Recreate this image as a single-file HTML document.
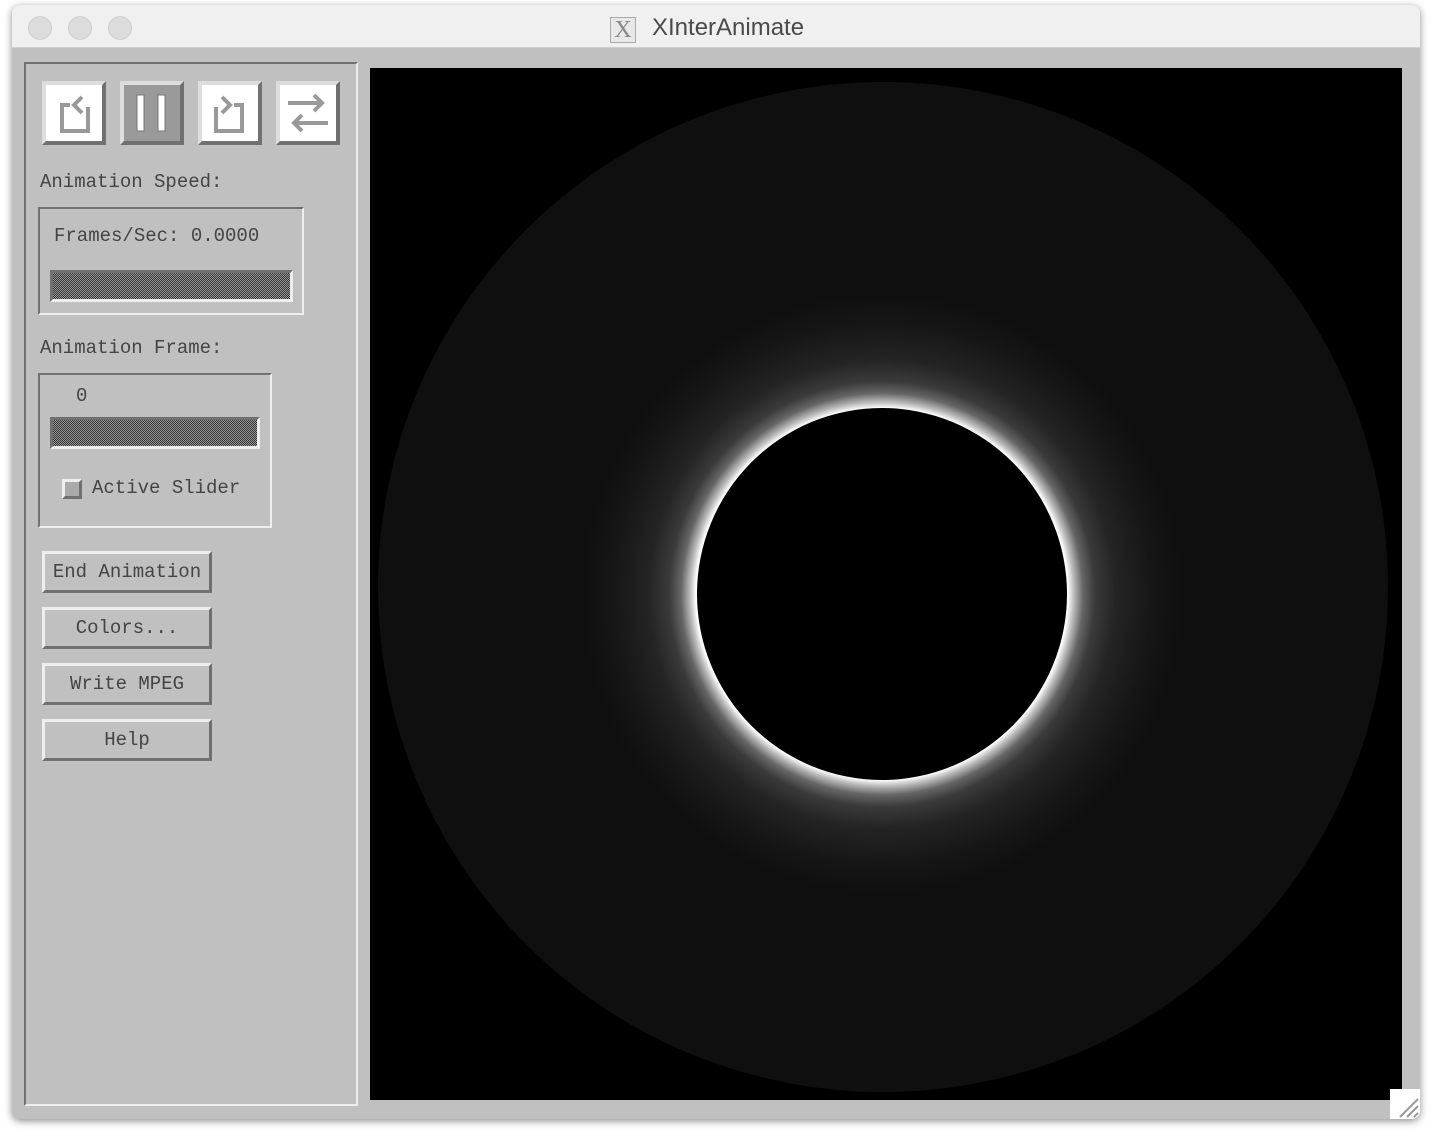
<!DOCTYPE html>
<html><head><meta charset="utf-8"><style>
*{margin:0;padding:0;box-sizing:border-box}
body{width:1432px;height:1136px;background:#fff;position:relative;overflow:hidden;font-family:"Liberation Mono",monospace}
.win{position:absolute;left:12px;top:5px;width:1408px;height:1114px;border-radius:8px;background:#c0c0c0;box-shadow:0 2px 8px rgba(0,0,0,.45);overflow:hidden}
.tb{position:absolute;left:0;top:0;width:100%;height:43px;background:#f0f0f0;border-bottom:1px solid #d0d0d0}
.dot{position:absolute;top:11px;width:24px;height:24px;border-radius:50%;background:#dcdcdc;border:1px solid #cfcfcf}
.title{position:absolute;left:640px;top:9px;font:24px "Liberation Sans",sans-serif;color:#4a4a4a}
.xi{position:absolute;left:598px;top:12px;width:26px;height:26px;border:1px solid #aaa;background:#e8e8e8;font:24px "Liberation Serif",serif;color:#888;text-align:center;line-height:24px}
.a{position:absolute}
.panel{left:12px;top:57px;width:334px;height:1044px;border:2px solid;border-color:#707070 #eee #eee #707070}
.ib{width:64px;height:64px;background:#fff;border:4px solid;border-color:#ddd #707070 #707070 #ddd}
.lbl{font-size:19px;color:#444;letter-spacing:0px}
.frame{border:2px solid;border-color:#707070 #eee #eee #707070}
.sl{border:3px solid;border-color:#707070 #eee #eee #707070;background:repeating-conic-gradient(#333 0 25%,#999 0 50%) 0 0/2px 2px}
.btn{width:170px;height:42px;border:3px solid;border-color:#eee #707070 #707070 #eee;font-size:19px;color:#444;text-align:center;line-height:36px}
.img{left:358px;top:63px;width:1032px;height:1032px;background:#000;overflow:hidden}
</style></head><body>
<div class="win">
<div class="tb">
<div class="dot" style="left:16px"></div><div class="dot" style="left:56px"></div><div class="dot" style="left:96px"></div>
<div class="xi">X</div><div class="title">XInterAnimate</div>
</div>
<div class="a panel"></div>
<div class="a ib" style="left:30px;top:76px"><svg width="56" height="56"><path d="M14 22v24h26V20h-8M20 28l8-8-8-8" fill="none" stroke="#999" stroke-width="4" transform="scale(-1,1) translate(-56,0)"/></svg></div>
<div class="a ib" style="left:108px;top:76px;background:#9a9a9a"><svg width="56" height="56"><rect x="13" y="10" width="7" height="36" fill="#fff" stroke="#777"/><rect x="34" y="10" width="7" height="36" fill="#fff" stroke="#777"/></svg></div>
<div class="a ib" style="left:186px;top:76px"><svg width="56" height="56"><path d="M14 22v24h26V20h-8M20 28l8-8-8-8" fill="none" stroke="#999" stroke-width="4"/></svg></div>
<div class="a ib" style="left:264px;top:76px"><svg width="56" height="56"><path d="M8 18h34M34 10l8 8-8 8M48 38H14M22 30l-8 8 8 8" fill="none" stroke="#999" stroke-width="4"/></svg></div>
<div class="a lbl" style="left:28px;top:166px">Animation Speed:</div>
<div class="a frame" style="left:26px;top:202px;width:266px;height:108px"></div>
<div class="a lbl" style="left:42px;top:220px">Frames/Sec:  0.0000</div>
<div class="a sl" style="left:38px;top:265px;width:243px;height:32px"></div>
<div class="a lbl" style="left:28px;top:332px">Animation Frame:</div>
<div class="a frame" style="left:26px;top:368px;width:234px;height:155px"></div>
<div class="a lbl" style="left:64px;top:380px">0</div>
<div class="a sl" style="left:38px;top:412px;width:210px;height:32px"></div>
<div class="a" style="left:50px;top:474px;width:20px;height:20px;background:#aaa;border:3px solid;border-color:#eee #707070 #707070 #eee"></div>
<div class="a lbl" style="left:80px;top:472px">Active Slider</div>
<div class="a btn" style="left:30px;top:546px">End Animation</div>
<div class="a btn" style="left:30px;top:602px">Colors...</div>
<div class="a btn" style="left:30px;top:658px">Write MPEG</div>
<div class="a btn" style="left:30px;top:714px">Help</div>
<div class="a img">
<div class="a" style="left:8px;top:14px;width:1010px;height:1010px;border-radius:50%;background:#0f0f0f"></div>
<div class="a" style="left:212px;top:226px;width:600px;height:600px;border-radius:50%;background:radial-gradient(circle closest-side,#fff 0,#fff 62%,#bbb 64%,#666 67%,#3a3a3a 71%,#242424 78%,#161616 90%,rgba(15,15,15,0) 100%)"></div>
<div class="a" style="left:327px;top:340px;width:370px;height:372px;border-radius:50%;background:#000"></div>
</div>
<div class="a" style="left:1378px;top:1084px;width:30px;height:30px;background:#fff"><svg width="30" height="30"><path d="M10 28L28 10M17 28L28 17M24 28l4-4" stroke="#999" stroke-width="2"/></svg></div>
</div>
</body></html>
